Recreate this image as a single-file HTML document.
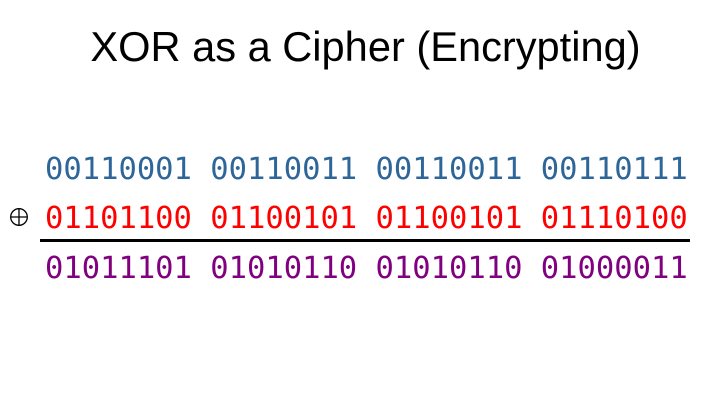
<!DOCTYPE html>
<html><head><style>
body{margin:0;width:712px;height:403px;background:#fff;position:relative;overflow:hidden}
.t{position:absolute;left:0;width:731px;text-align:center;top:23px;font:41.6px "Liberation Sans",sans-serif;color:#000;line-height:48px}
.r{position:absolute;left:45px;font:30.5px "DejaVu Sans Mono",monospace;white-space:pre;line-height:36px}
.l{position:absolute;left:40px;width:650px;top:239px;height:3px;background:#000}
</style></head><body>
<div class="t">XOR as a Cipher (Encrypting)</div>
<div class="r" style="top:152px;color:#2e6699">00110001 00110011 00110011 00110111</div>
<svg style="position:absolute;left:0;top:0" width="40" height="240"><circle cx="19" cy="217" r="8.3" fill="none" stroke="#000" stroke-width="1.3"/><path d="M10.7 217H27.3M19 208.7V225.3" stroke="#000" stroke-width="1.3"/></svg>
<div class="r" style="top:201px;color:#ff0000">01101100 01100101 01100101 01110100</div>
<div class="l"></div>
<div class="r" style="top:251px;color:#800080">01011101 01010110 01010110 01000011</div>
</body></html>
